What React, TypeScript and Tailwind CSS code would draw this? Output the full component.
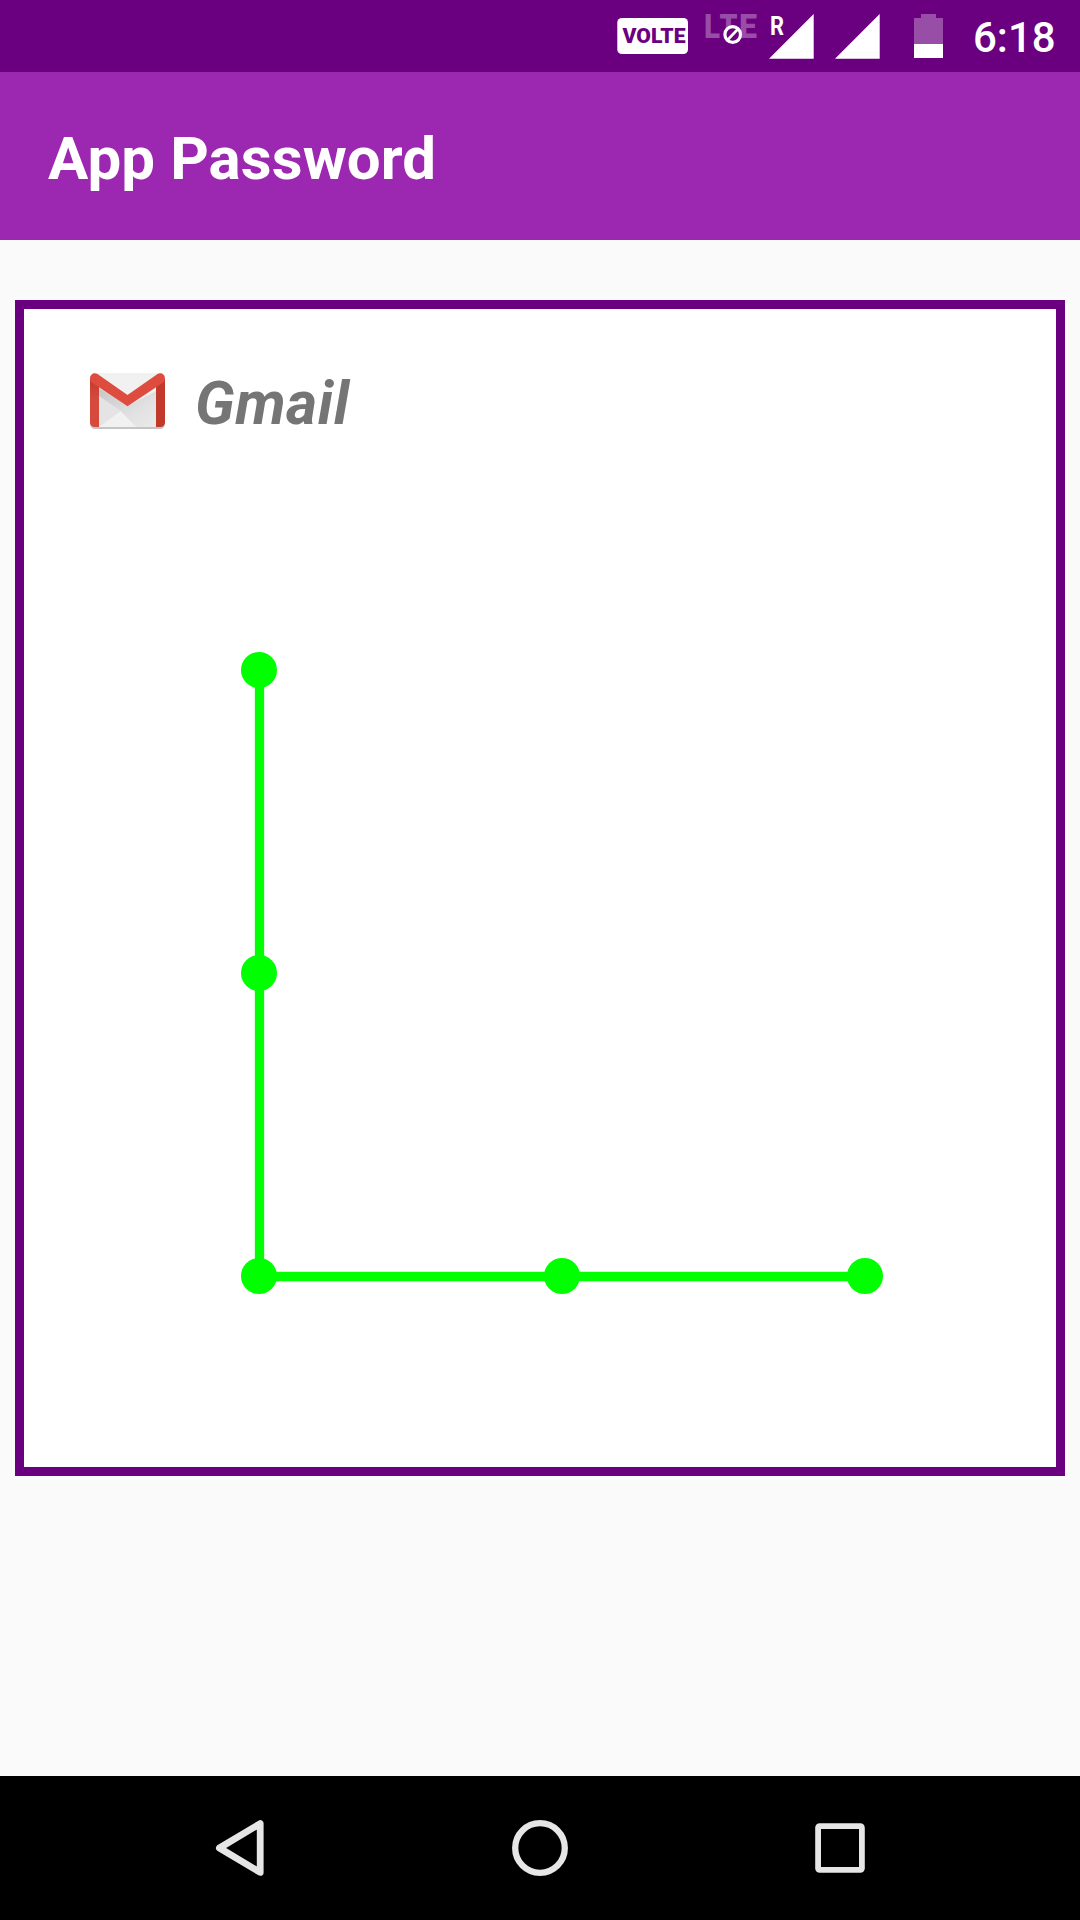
import React from "react";

const DOTS: [number, number][] = [
  [18, 18],
  [18, 321],
  [18, 624],
  [321, 624],
  [624, 624],
];

function StatusIcons() {
  return (
    <svg width="463" height="72" viewBox="617 0 463 72" fill="#fff" fontFamily="Roboto, sans-serif">
      <rect x="617.3" y="18" width="70.7" height="36" rx="4.5" />
      <text x="622.5" y="43.4" fontSize="20.5" fontWeight="900" fill="#6a0080" textLength="63" lengthAdjust="spacingAndGlyphs">
        VOLTE
      </text>
      <g fill="#984da6" fontSize="32.5" fontWeight="900">
        <text x="704" y="38" textLength="16" lengthAdjust="spacingAndGlyphs">L</text>
        <text x="719.5" y="38" textLength="18" lengthAdjust="spacingAndGlyphs">T</text>
        <text x="739" y="38" textLength="18" lengthAdjust="spacingAndGlyphs">E</text>
      </g>
      <circle cx="732.7" cy="34.5" r="7.8" fill="#6a0080" stroke="#fff" strokeWidth="3.2" />
      <path d="M728 39.5 737.5 29.5" stroke="#fff" strokeWidth="2.6" />
      <text x="770" y="35.3" fontSize="25" fontWeight="700" textLength="14" lengthAdjust="spacingAndGlyphs">R</text>
      <path d="M769 58.7 813.7 14v44.7zM835 58.7 879.7 14v44.7z" />
      <path d="M914 18h7v-4h15v4h7v26h-29z" fill="#984da6" />
      <path d="M914 44h29v14h-29z" />
    </svg>
  );
}

function GmailIcon() {
  return (
    <svg className="mb-[4px] block overflow-visible" width="75" height="56" viewBox="0 0 75 56">
      <defs>
        <linearGradient id="fold" x1="0" y1="0" x2="1" y2="1">
          <stop offset="0" stopColor="#c7c7c7" />
          <stop offset=".65" stopColor="#e2e2e2" />
          <stop offset="1" stopColor="#eaeaea" />
        </linearGradient>
        <linearGradient id="side" x1="0" y1="0" x2="0" y2="1">
          <stop offset="0" stopColor="#c23a2d" />
          <stop offset=".4" stopColor="#d54a3d" />
        </linearGradient>
      </defs>
      <rect x="0.3" y="3" width="74.4" height="53" rx="4.5" fill="#b0b0b0" opacity=".75" />
      <path d="M4 0h67v54H4z" fill="#f1f1f1" />
      <path d="M9 15 37.5 33 66 18v36H46L9 23z" fill="url(#fold)" />
      <path d="M9 23 31 38 9 54z" fill="#e4e4e4" />
      <path d="M9 54 31 38 46 54z" fill="#f1f1f1" />
      <path d="M0 6v43.500a4.500 4.500 0 0 0 4.500 4.500H9V13z" fill="url(#side)" />
      <path d="M75 6v43.500a4.500 4.500 0 0 1-4.500 4.500H66V13z" fill="#c1392b" />
      <path d="M0 5.500C0 1 4.400-1.100 7.500 1L37.500 22 67.500 1C70.600-1.100 75 1 75 5.500 75 7.500 74.200 9 72.500 10L37.500 33.300 2.500 10C.8 9 0 7.500 0 5.500Z" fill="#de4c40" />
    </svg>
  );
}

export default function App() {
  return (
    <div className="flex h-[1920px] w-[1080px] flex-col overflow-hidden bg-[#fafafa] font-['Roboto',sans-serif]">
      <header>
        <div className="relative flex h-[72px] justify-end bg-[#6a0080] text-white">
          <StatusIcons />
          <span className="absolute top-[13px] left-[973px] text-[42px] leading-[49px] font-medium">6:18</span>
        </div>
        <div className="flex h-[168px] items-center bg-[#9c27b0] pt-[5px] pl-12">
          <h1 className="text-[60px] leading-[70px] font-bold tracking-[0.1px] text-white">App Password</h1>
        </div>
      </header>
      <main className="flex-1 px-[15px] pt-[60px]">
        <section className="flex h-[1176px] flex-col border-[9px] border-[#6a0080] bg-white">
          <div className="flex h-[187px] items-center pl-[66px]">
            <GmailIcon />
            <span className="mt-[2px] ml-[30px] text-[60px] leading-[70px] font-bold tracking-[0.5px] text-[#757575] italic">Gmail</span>
          </div>
          <svg className="mt-[156px] ml-[217px] block" width="642" height="642" viewBox="0 0 642 642">
            <path d="M18.500 18V624.500H624" fill="none" stroke="#0f0" strokeWidth="9.300" />
            {DOTS.map(([x, y]) => (
              <circle key={`${x}-${y}`} cx={x} cy={y} r="18" fill="#0f0" />
            ))}
          </svg>
        </section>
      </main>
      <nav className="flex h-36 items-center justify-between bg-black px-[210px]">
        <svg width="60" height="60" viewBox="210 1818 60 60" fill="none" stroke="#e6e6e6" strokeWidth="6.800" strokeLinejoin="round">
          <path d="M219.400 1848 260.200 1823.600V1872.400Z" />
        </svg>
        <svg width="60" height="60" viewBox="0 0 60 60" fill="none" stroke="#e6e6e6" strokeWidth="6.300">
          <circle cx="30" cy="30" r="24.800" />
        </svg>
        <svg width="60" height="60" viewBox="810 1818 60 60" fill="#e6e6e6">
          <rect x="815.200" y="1823.200" width="49.600" height="49.600" rx="4.500" />
          <path d="M821 1829h38v38h-38z" fill="#000" />
        </svg>
      </nav>
    </div>
  );
}
